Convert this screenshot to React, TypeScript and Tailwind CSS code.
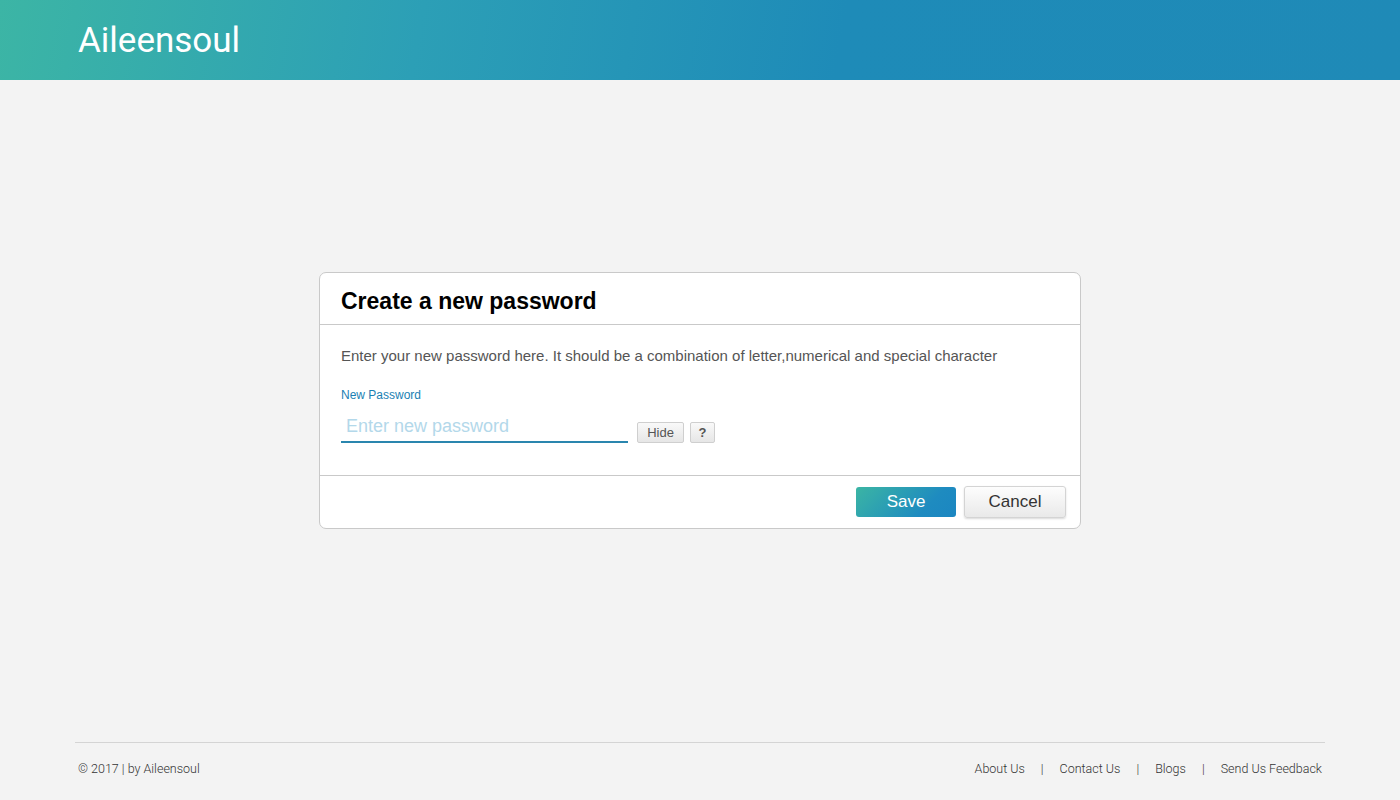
import React from "react";

export default function App() {
  return (
    <div className="min-h-[800px] flex flex-col bg-[#f3f3f3]">
      <header className="h-[80px] bg-[linear-gradient(100deg,#3cb5a5_0%,#2c9fb6_30%,#1e8bb8_60%,#1f8ab7_100%)] flex items-center px-[78px]">
        <h1 className="text-white text-[35px] font-['Roboto',sans-serif] leading-none">
          Aileensoul
        </h1>
      </header>

      <main className="flex-1 flex justify-center pt-[192px]">
        <div className="w-[762px] h-[257px] bg-white border border-[#c9c9c9] rounded-[7px] flex flex-col font-['Liberation_Sans',Arial,sans-serif]">
          <div className="h-[52px] border-b border-[#c9c9c9] flex items-center px-[21px]">
            <h2 className="text-[23px] font-bold text-black leading-none mt-[6px]">
              Create a new password
            </h2>
          </div>

          <div className="flex-1 px-[21px] pt-[22px] border-b border-[#c9c9c9]">
            <p className="text-[15px] text-[#555] leading-[18px]">
              Enter your new password here. It should be a combination of letter,numerical and special character
            </p>
            <label className="block text-[12px] text-[#1b7fb3] mt-[23px] leading-[14px]">
              New Password
            </label>
            <div className="flex items-end mt-[10px]">
              <input
                type="password"
                placeholder="Enter new password"
                className="w-[287px] h-[31px] border-b-2 border-[#2a86ae] outline-none px-[5px] text-[18px] placeholder:text-[#b3d8ea] bg-transparent"
              />
              <button className="ml-[9px] w-[47px] h-[21px] border border-[#cfcfcf] rounded-[2px] bg-[linear-gradient(#f9f9f9,#e6e6e6)] text-[13px] text-[#555] leading-none">
                Hide
              </button>
              <button className="ml-[6px] w-[25px] h-[21px] border border-[#cfcfcf] rounded-[2px] bg-[linear-gradient(#f9f9f9,#e6e6e6)] text-[13px] font-bold text-[#555] leading-none">
                ?
              </button>
            </div>
          </div>

          <div className="h-[52px] flex items-center justify-end gap-[8px] pr-[14px]">
            <button className="w-[100px] h-[30px] rounded-[3px] bg-[linear-gradient(135deg,#3bb5a4,#1e8bc0_70%,#1b86c1)] text-white text-[17px]">
              Save
            </button>
            <button className="w-[102px] h-[32px] rounded-[3px] border border-[#d4d4d4] bg-[linear-gradient(#fdfdfd,#e9e9e9)] shadow-[0_1px_2px_rgba(0,0,0,0.15)] text-[#333] text-[17px]">
              Cancel
            </button>
          </div>
        </div>
      </main>

      <footer className="mx-[75px] border-t border-[#d4d4d4] h-[58px] flex items-center justify-between px-[3px] pb-[4px] font-['Roboto',sans-serif] font-light text-[12.5px] text-[#333]">
        <span>© 2017 | by Aileensoul</span>
        <nav className="flex items-center gap-[16px]">
          <a>About Us</a>
          <span className="text-[#333]">|</span>
          <a>Contact Us</a>
          <span className="text-[#333]">|</span>
          <a>Blogs</a>
          <span className="text-[#333]">|</span>
          <a>Send Us Feedback</a>
        </nav>
      </footer>
    </div>
  );
}
